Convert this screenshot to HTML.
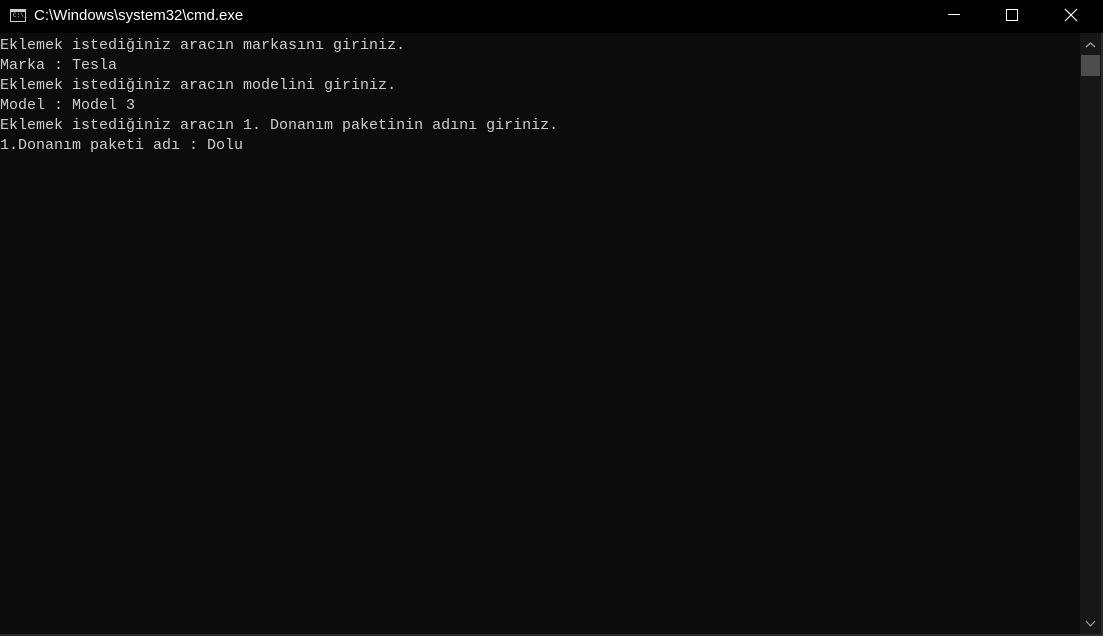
<!DOCTYPE html>
<html><head><meta charset="utf-8"><style>
html,body{margin:0;padding:0;width:1103px;height:636px;overflow:hidden;background:#0c0c0c}
#title{position:absolute;left:0;top:0;width:1103px;height:33px;background:#000;color:#fff;font:15px "Liberation Sans",sans-serif}
#title .t{position:absolute;left:34px;top:7px}
#icon{position:absolute;left:10px;top:9px;width:14px;height:11px;border:1px solid #ccc;background:#000}
#icon:before{content:"";position:absolute;left:0;top:0;width:14px;height:2px;background:#ccc}
#icon span{position:absolute;left:2px;top:3px;font:6px "Liberation Mono",monospace;color:#ccc;line-height:6px}
#min{position:absolute;left:948px;top:14px;width:12px;height:1px;background:#fff}
#max{position:absolute;left:1006px;top:9px;width:10px;height:10px;border:1px solid #fff}
#close{position:absolute;left:1064px;top:8px}
#con{position:absolute;left:0;top:36px;font:15px/20px "Liberation Mono","DejaVu Sans Mono",monospace;color:#cccccc;white-space:pre}
#sb{position:absolute;left:1080px;top:33px;width:21px;height:601px;background:#171717}
#thumb{position:absolute;left:1081px;top:55px;width:19px;height:21px;background:#4d4d4d}
#edge{position:absolute;left:1101px;top:33px;width:2px;height:603px;background:#2b2b2b}
#bot{position:absolute;left:0;top:634px;width:1103px;height:2px;background:#2b2b2b}
</style></head><body>
<div id="title"><div id="icon"><span>C:\_</span></div><div class="t">C:\Windows\system32\cmd.exe</div>
<div id="min"></div><div id="max"></div>
<svg id="close" width="14" height="14" viewBox="0 0 14 14"><path d="M1 1L13 13M13 1L1 13" stroke="#fff" stroke-width="1.2"/></svg></div>
<div id="con">Eklemek istediğiniz aracın markasını giriniz.
Marka : Tesla
Eklemek istediğiniz aracın modelini giriniz.
Model : Model 3
Eklemek istediğiniz aracın 1. Donanım paketinin adını giriniz.
1.Donanım paketi adı : Dolu</div>
<div id="sb"></div><div id="thumb"></div>
<svg style="position:absolute;left:1085px;top:41px" width="11" height="8"><path d="M1 6L5.5 2L10 6" stroke="#9a9a9a" stroke-width="1.5" fill="none"/></svg>
<svg style="position:absolute;left:1085px;top:620px" width="11" height="8"><path d="M1 1L5.5 6L10 1" stroke="#9a9a9a" stroke-width="1.2" fill="none"/></svg>
<div id="edge"></div><div id="bot"></div>
</body></html>
